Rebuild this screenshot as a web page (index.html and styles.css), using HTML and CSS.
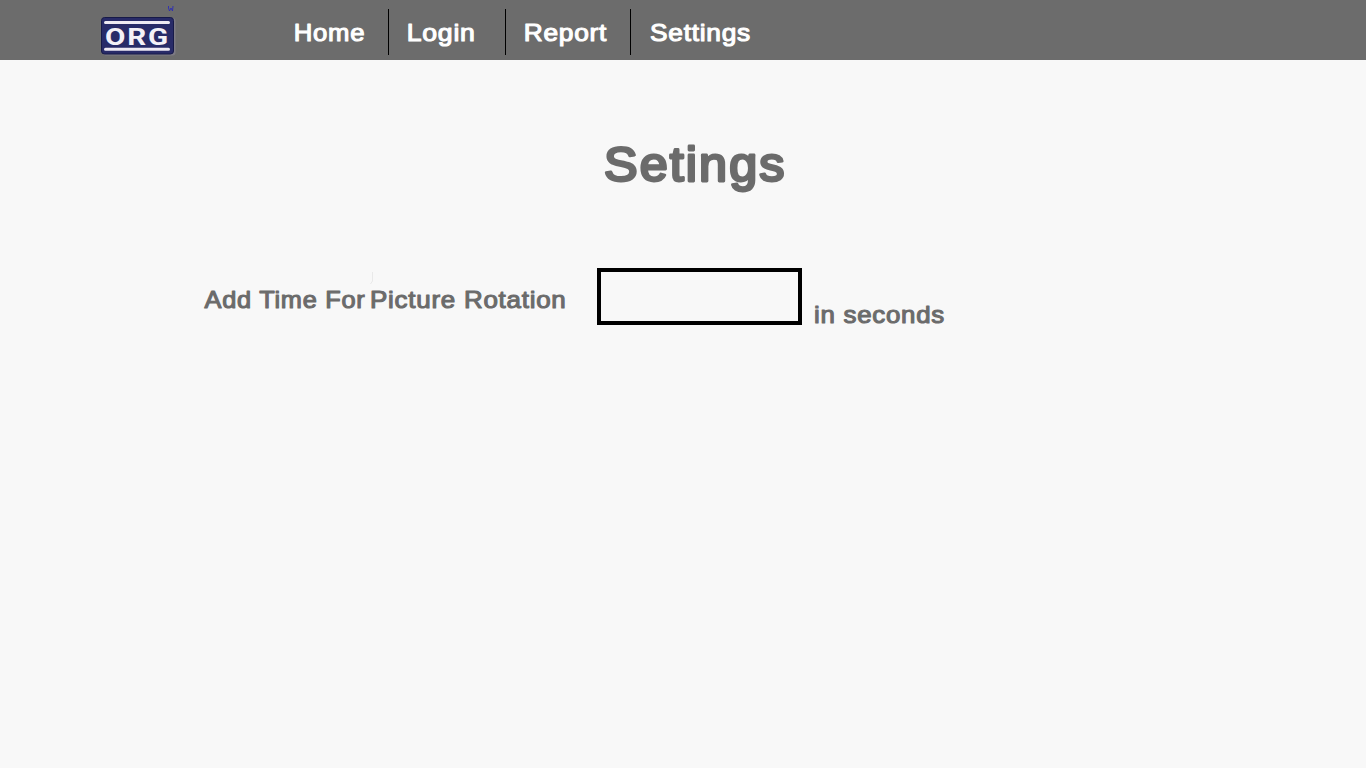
FILE: index.html
```html
<!DOCTYPE html>
<html lang="en">
<head>
<meta charset="utf-8">
<title>Settings</title>
<link rel="stylesheet" href="styles.css">
</head>
<body>
<header class="topbar">
  <a class="logo" href="#">
    <svg width="80" height="60" viewBox="0 0 80 60" role="img" aria-label="ORG">
      <path class="logo-mark" d="M69.500 6v2l1 3 1.500-3 1.500 3 .5-5"/>
      <rect class="logo-shade" x="4" y="18" width="72.500" height="37.500" rx="3"/>
      <rect class="logo-plate" x="2.500" y="17.500" width="72" height="36.500" rx="3"/>
      <path class="logo-rule" d="M6.500 22.500h63M6.500 49.200h63"/>
      <text class="logo-text" x="6" y="44.500" textLength="65" lengthAdjust="spacingAndGlyphs">ORG</text>
    </svg>
  </a>
  <nav class="menu">
    <a class="item home" href="#"><svg width="72" height="46"><text x="-.3" y="32" textLength="71.500" lengthAdjust="spacingAndGlyphs">Home</text></svg></a>
    <a class="item login" href="#"><svg width="70" height="46"><text x="-.3" y="32" textLength="69" lengthAdjust="spacingAndGlyphs">Login</text></svg></a>
    <a class="item report" href="#"><svg width="86" height="46"><text x="-.3" y="32" textLength="83.500" lengthAdjust="spacingAndGlyphs">Report</text></svg></a>
    <a class="item" href="#"><svg width="104" height="46"><text x="0" y="32" textLength="101" lengthAdjust="spacingAndGlyphs">Settings</text></svg></a>
  </nav>
</header>
<main class="page">
  <h1 class="title"><svg width="190" height="70"><text x="4" y="49" textLength="182.500" lengthAdjust="spacingAndGlyphs">Setings</text></svg></h1>
  <div class="field">
    <svg class="label" width="370" height="57"><path class="tick" d="M169.500 4v9l-2 3"/><g class="words"><text x="1.500" y="40" textLength="161" lengthAdjust="spacingAndGlyphs">Add Time For</text><text x="167" y="40" textLength="196.500" lengthAdjust="spacingAndGlyphs">Picture Rotation</text></g></svg>
    <input class="seconds" type="text" aria-label="Seconds">
    <svg class="unit" width="140" height="70"><text x="0" y="55" textLength="131" lengthAdjust="spacingAndGlyphs">in seconds</text></svg>
  </div>
</main>
</body>
</html>
```
FILE: styles.css
```css
* { box-sizing: border-box; }
body {
  margin: 0;
  min-height: 768px;
  background: #f8f8f8;
  font-family: "Liberation Sans", Arial, sans-serif;
}
svg { display: block; overflow: visible; }
text {
  font-size: 24px;
  letter-spacing: 0.7px;
  fill: #6b6b6b;
  stroke: #6b6b6b;
  stroke-width: 1.1px;
  stroke-linejoin: round;
}
.topbar {
  display: flex;
  height: 60px;
  padding-left: 99px;
  background: #6c6c6c;
}
.logo { width: 195px; }
.logo-mark { fill: none; stroke: #2b2bb5; stroke-width: 0.9px; }
.logo-shade { fill: #7d7a84; }
.logo-plate { fill: #282b68; stroke: #171a48; stroke-width: 1px; }
.logo-rule { stroke: #eeeaf3; stroke-width: 3px; stroke-linecap: round; }
.logo-text {
  font-family: Roboto, "Liberation Sans", sans-serif;
  font-size: 24px;
  font-weight: bold;
  letter-spacing: 1.5px;
  fill: #f4f1f7;
  stroke: none;
}
.menu { display: flex; padding-top: 9px; }
.item { height: 46px; border-right: 1px solid #000; margin-right: 18px; }
.item:last-child { border: 0; margin: 0; }
.item text { fill: #fff; stroke: #fff; }
.home { width: 95px; }
.login { width: 99px; }
.report { width: 107px; margin-right: 19px; }
.page { padding-top: 72px; }
.title { width: 190px; height: 136px; margin: 0 0 0 600px; }
.title text {
  font-size: 48px;
  font-weight: normal;
  letter-spacing: 2px;
  stroke-width: 2.8px;
}
.field { display: flex; align-items: flex-start; padding-left: 203px; }
.label { margin-right: 24px; }
.tick { fill: none; stroke: #e9e9e9; stroke-width: 1px; }
.seconds {
  width: 205px;
  height: 57px;
  padding: 0 12px;
  border: 4px solid #000;
  border-radius: 0;
  outline: 0;
  background: #f8f8f8;
  font: 24px "Liberation Sans", Arial, sans-serif;
  color: #6b6b6b;
}
.unit { margin-left: 12px; }
```
